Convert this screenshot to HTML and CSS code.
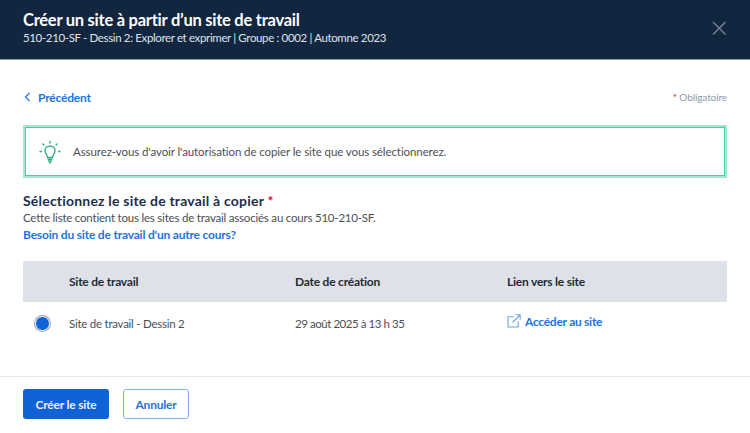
FILE: index.html
```html
<!DOCTYPE html>
<html lang="fr">
<head>
    <meta charset="UTF-8">
    <title>Créer un site à partir d'un site de travail</title>
    <link rel="stylesheet" href="styles.css">
</head>
<body>
    <!-- Cabeçalho -->
    <div class="header">
        <div>
            <div class="header-title">Créer un site à partir d’un site de travail</div>
            <div class="header-sub">510-210-SF - Dessin 2: Explorer et exprimer | Groupe : 0002 | Automne 2023</div>
        </div>
        <svg class="close-icon" width="16" height="16" viewBox="0 0 16 16">
            <path d="M2 2 L14.5 14.5 M14.5 2 L2 14.5" fill="none" stroke="#7d8a9b" stroke-width="1.2"/>
        </svg>
    </div>

    <div class="content">
        <div class="top-row">
            <a class="back-link">
                <svg width="7" height="10" viewBox="0 0 7 10">
                    <path d="M5.5 1 L1.5 5 L5.5 9" fill="none" stroke="#2473dc" stroke-width="1.2"/>
                </svg>
                Précédent
            </a>
            <div class="required-note"><span class="star">*</span> Obligatoire</div>
        </div>

        <div class="notice">
            <svg class="bulb" width="24" height="24" viewBox="0 0 24 24" fill="none" stroke="#2fae86" stroke-width="1.4">
                <path d="M12 1 V3.5 M4.5 3.5 L6.2 5.2 M19.5 3.5 L17.8 5.2 M1.5 11.5 H4 M20 11.5 H22.5"/>
                <path d="M9.5 17.5 C9.5 14.5 7 13.8 7 10.8 C7 8 9.2 6 12 6 C14.8 6 17 8 17 10.8 C17 13.8 14.5 14.5 14.5 17.5 Z"/>
                <path d="M9.5 19.2 H14.5 M10 21 H14 M11 22.6 H13"/>
            </svg>
            <span>Assurez-vous d'avoir l'autorisation de copier le site que vous sélectionnerez.</span>
        </div>

        <h2 class="section-title">Sélectionnez le site de travail à copier <span class="star">*</span></h2>
        <p class="section-text">Cette liste contient tous les sites de travail associés au cours 510-210-SF.</p>
        <a class="other-link">Besoin du site de travail d'un autre cours?</a>

        <div class="table-row table-head">
            <div></div>
            <div>Site de travail</div>
            <div>Date de création</div>
            <div>Lien vers le site</div>
        </div>
        <div class="table-row table-body">
            <div class="radio"></div>
            <div>Site de travail - Dessin 2</div>
            <div class="date-cell">29 août 2025 à 13 h 35</div>
            <a class="site-link">
                <svg width="14" height="14" viewBox="0 0 14 14" fill="none" stroke="#6ea3e6" stroke-width="1.1">
                    <path d="M6.5 2.8 H1 V13 H11.2 V7.5"/>
                    <path d="M5.5 8.5 L13 1 M8.5 0.8 H13.2 V5.5"/>
                </svg>
                Accéder au site
            </a>
        </div>
    </div>

    <!-- Rodapé -->
    <div class="footer">
        <button class="btn btn-primary">Créer le site</button>
        <button class="btn btn-secondary">Annuler</button>
    </div>
</body>
</html>
```

FILE: styles.css
```css
* {
    margin: 0;
    padding: 0;
    box-sizing: border-box;
    font-family: 'Lato', 'Noto Sans', sans-serif;
}

body {
    background-color: white;
    width: 750px;
    height: 433px;
    overflow: hidden;
}

.header {
    height: 60px;
    background-color: #12263f;
    border-bottom: 1px solid #8a97a8;
    padding: 10px 23px 0 23px;
    display: flex;
    justify-content: space-between;
    color: white;
}

.header-title {
    font-size: 16.5px;
    font-weight: 700;
    line-height: 20px;
    letter-spacing: -0.25px;
}

.header-sub {
    font-size: 11.5px;
    line-height: 16px;
    letter-spacing: -0.36px;
    color: #dfe4ea;
}

.close-icon {
    margin-top: 10px;
}

.content {
    padding: 0 23px;
}

.top-row {
    display: flex;
    justify-content: space-between;
    align-items: center;
    height: 65px;
    padding-top: 9px;
}

.back-link {
    display: flex;
    align-items: center;
    gap: 7px;
    margin-left: 1px;
    font-size: 12px;
    font-weight: 700;
    letter-spacing: -0.2px;
    color: #2473dc;
}

.required-note {
    font-size: 10px;
    letter-spacing: -0.1px;
    color: #8d99ab;
}

.star {
    color: #e4002b;
}

.notice {
    height: 53px;
    border: 2px solid #a6e8cf;
    box-shadow: inset 0 0 0 1px #45d09f;
    display: flex;
    align-items: center;
    padding-left: 13px;
    gap: 11px;
    font-size: 11.5px;
    letter-spacing: -0.09px;
    color: #4a4f57;
}

.section-title {
    margin-top: 14px;
    font-size: 14px;
    line-height: 18px;
    font-weight: 700;
    letter-spacing: 0.2px;
    color: #1c2f4a;
}

.section-text {
    font-size: 11.5px;
    line-height: 16px;
    letter-spacing: -0.21px;
    color: #4a4f57;
}

.other-link {
    display: block;
    font-size: 12px;
    line-height: 17px;
    font-weight: 700;
    letter-spacing: -0.19px;
    color: #2473dc;
}

.table-row {
    display: grid;
    grid-template-columns: 46px 226px 212px 1fr;
    align-items: center;
}

.table-head {
    margin-top: 18px;
    height: 41px;
    background-color: #dee2e8;
    font-size: 12px;
    font-weight: 700;
    letter-spacing: -0.22px;
    color: #252b33;
}

.table-body {
    height: 42px;
    font-size: 11.5px;
    letter-spacing: -0.25px;
    color: #4a4f57;
}

.date-cell {
    letter-spacing: -0.45px;
}

.radio {
    width: 15px;
    height: 15px;
    margin-left: 12px;
    border-radius: 50%;
    background-color: #0f62d6;
    box-shadow: 0 0 0 1px #9aa3b0;
    border: 1.5px solid white;
}

.site-link {
    display: flex;
    align-items: center;
    gap: 4px;
    margin-top: -4px;
    font-size: 12px;
    font-weight: 700;
    letter-spacing: -0.27px;
    color: #2473dc;
}

.footer {
    margin-top: 32px;
    border-top: 1px solid #e2e5e9;
    padding: 12px 23px 0 23px;
    display: flex;
    gap: 14px;
}

.btn {
    height: 30px;
    border-radius: 3px;
    font-size: 12px;
    font-weight: 700;
    letter-spacing: -0.2px;
    cursor: pointer;
}

.btn-primary {
    width: 86px;
    background-color: #0f62d6;
    border: none;
    color: #e9f0fb;
}

.btn-secondary {
    width: 66px;
    background-color: white;
    border: 1px solid #7fb0ec;
    color: #2a72d6;
}
```
